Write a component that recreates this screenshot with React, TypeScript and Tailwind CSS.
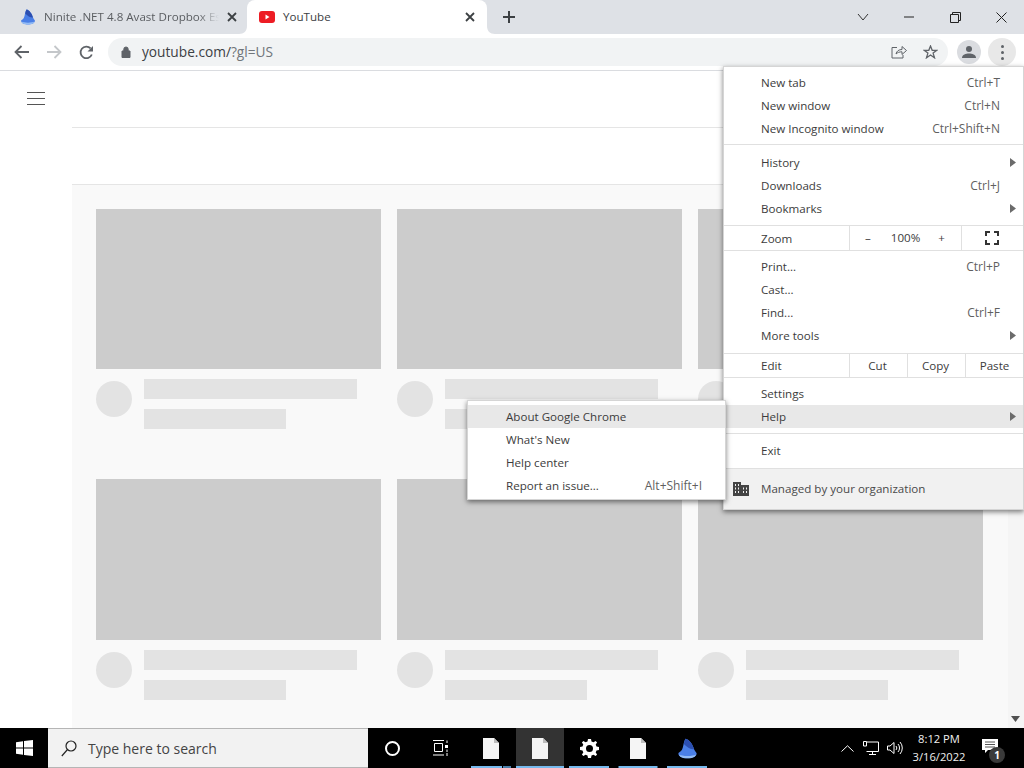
import React from "react";

const FONT = "font-['Open_Sans','Noto_Sans',sans-serif]";

function NiniteIcon({ size = 16 }: { size?: number }) {
  return (
    <svg width={size} height={size} viewBox="0 0 16 16">
      <path d="M6.500 .5 C9.500 1 12 5 13 8.500 C13.500 10 15 11 15 12 C14.500 14.500 11 15.500 8 15.500 C5 15.500 1.500 14.500 1 12 C1 11 3 10.500 3.800 9 C5 6.500 5 2.500 6.500 .5Z" fill="#4a7fe6" />
      <path d="M6.500 .5 C9.500 1 12 5 13 8.500 C10.500 8.800 7.500 7 5.200 4.500 C5.500 3 6 1.500 6.500 .5Z" fill="#2c4fb0" />
      <path d="M1.500 12.500 C4 14 12 14 14.500 12.500 C14 14.800 11 15.500 8 15.500 C5 15.500 2 14.800 1.500 12.500Z" fill="#93bcf5" />
    </svg>
  );
}

function Doc() {
  return (
    <svg width="16" height="21" viewBox="0 0 16 21">
      <path d="M0 0H11L16 5V21H0Z" fill="#f5f5f5" />
      <path d="M11 0L16 5H11Z" fill="#bdbdbd" />
    </svg>
  );
}

function Row({ label, right, arrow, active, sub }: { label: string; right?: string; arrow?: boolean; active?: boolean; sub?: boolean }) {
  return (
    <div className={`relative flex h-[23px] shrink-0 items-center justify-between pr-[23px] ${sub ? "pl-[38px]" : "pl-[37px]"} ${active ? "bg-[#e8e8e8]" : ""}`}>
      <span className="text-[#3c3c3c]">{label}</span>
      {right && <span className="text-[12px] text-[#5f5f5f]">{right}</span>}
      {arrow && (
        <svg className="absolute right-[7px] top-[7px]" width="6" height="9" viewBox="0 0 6 9">
          <path d="M0 0L6 4.500L0 9Z" fill="#6b6b6b" />
        </svg>
      )}
    </div>
  );
}

function Sep({ t, b }: { t: number; b: number }) {
  return <div className="h-px shrink-0 bg-[#e0e0e0]" style={{ marginTop: t, marginBottom: b }} />;
}

function Card({ tall }: { tall?: boolean }) {
  return (
    <div className="w-[285px] shrink-0">
      <div className={`bg-[#cccccc] ${tall ? "h-[161px]" : "h-[160px]"}`} />
      <div className="mt-[10px] flex gap-3">
        <div className="mt-[2px] h-9 w-9 shrink-0 rounded-full bg-[#e3e3e3]" />
        <div className="flex flex-col gap-[10px]">
          <div className="h-5 w-[213px] bg-[#e3e3e3]" />
          <div className="h-5 w-[142px] bg-[#e3e3e3]" />
        </div>
      </div>
    </div>
  );
}

function TbUnderline({ w }: { w: string }) {
  return <div className={`absolute bottom-0 left-1/2 h-[2px] -translate-x-1/2 bg-[#76b9ed] ${w}`} />;
}

export default function App() {
  return (
    <div className={`relative flex h-[768px] w-[1024px] flex-col overflow-hidden bg-white text-[11.6px] ${FONT}`}>
      {/* tab strip */}
      <div className="flex h-[34px] shrink-0 items-center bg-[#dee1e6] pl-[8px]">
        <div className="flex h-full w-[239px] shrink-0 items-center pl-[12px]">
          <NiniteIcon />
          <span className="ml-2 w-[175px] whitespace-nowrap text-[#5a5d61] [mask-image:linear-gradient(to_right,black_88%,transparent)]">Ninite .NET 4.8 Avast Dropbox Es</span>
          <svg className="ml-[8px]" width="10" height="10" viewBox="0 0 10 10"><path d="M1 1L9 9M9 1L1 9" stroke="#3c4043" strokeWidth="1.800" /></svg>
        </div>
        <div className="relative flex h-full w-[240px] shrink-0 items-center rounded-t-[8px] bg-white pl-[12px] pr-[12px]">
          <svg className="absolute -left-[8px] bottom-0" width="8" height="8" viewBox="0 0 8 8"><path d="M8 0V8H0C5 8 8 5 8 0Z" fill="#fff" /></svg>
          <svg className="absolute -right-[8px] bottom-0" width="8" height="8" viewBox="0 0 8 8"><path d="M0 0V8H8C3 8 0 5 0 0Z" fill="#fff" /></svg>
          <svg width="16" height="12" viewBox="0 0 16 12">
            <rect width="16" height="12" rx="3" fill="#ed1c24" />
            <path d="M6.500 3.500L10.500 6L6.500 8.500Z" fill="#fff" />
          </svg>
          <span className="ml-2 flex-1 text-[#3c4043]">YouTube</span>
          <svg width="10" height="10" viewBox="0 0 10 10"><path d="M1 1L9 9M9 1L1 9" stroke="#3c4043" strokeWidth="1.800" /></svg>
        </div>
        <svg className="ml-[15px]" width="14" height="14" viewBox="0 0 14 14"><path d="M7 1V13M1 7H13" stroke="#3c4043" strokeWidth="2" /></svg>
        <div className="ml-auto flex h-full items-center">
          <div className="flex w-[46px] justify-center">
            <svg width="12" height="8" viewBox="0 0 12 8"><path d="M1 1L6 7L11 1" stroke="#333" fill="none" /></svg>
          </div>
          <div className="flex w-[46px] justify-center">
            <svg width="10" height="2" viewBox="0 0 10 2"><path d="M0 1H10" stroke="#222" /></svg>
          </div>
          <div className="flex w-[46px] justify-center">
            <svg width="11" height="11" viewBox="0 0 11 11" fill="none"><path d="M.5 2.500H8.500V10.500H.5ZM2.500 2.500V.5H10.500V8.500H8.500" stroke="#222" /></svg>
          </div>
          <div className="flex w-[46px] justify-center">
            <svg width="11" height="11" viewBox="0 0 11 11"><path d="M.5 .5L10.500 10.500M10.500 .5L.5 10.500" stroke="#222" /></svg>
          </div>
        </div>
      </div>

      {/* toolbar */}
      <div className="flex h-[37px] shrink-0 items-center border-b border-[#dadce0] bg-white">
        <div className="flex w-[44px] justify-center">
          <svg width="16" height="14" viewBox="0 0 16 14" fill="none"><path d="M15 7H2M7.500 1L1.500 7L7.500 13" stroke="#5f6368" strokeWidth="1.800" /></svg>
        </div>
        <div className="-ml-[6px] flex w-[32px] justify-center">
          <svg width="16" height="14" viewBox="0 0 16 14" fill="none"><path d="M1 7H14M8.500 1L14.500 7L8.500 13" stroke="#c4c7ca" strokeWidth="1.800" /></svg>
        </div>
        <div className="flex w-[32px] justify-center">
          <svg width="15" height="15" viewBox="0 0 15 15" fill="none"><path d="M12.800 9.500A5.800 5.800 0 1 1 11.600 3.400" stroke="#5f6368" strokeWidth="1.800" /><path d="M14 1V6.500H8.500Z" fill="#5f6368" /></svg>
        </div>
        <div className="ml-[6px] flex h-[28px] w-[840px] items-center rounded-full bg-[#f1f3f4] pl-[13px] pr-[10px]">
          <svg width="10" height="12" viewBox="0 0 10 12"><path d="M1 5H9V11.500H1Z M2.800 5V3.200A2.200 2.200 0 0 1 7.200 3.200V5" fill="#5f6368" stroke="#5f6368" /></svg>
          <span className="ml-[11px] flex-1 text-[13.700px] text-[#3c4043]">youtube.com/<span className="text-[#70757a]">?gl=US</span></span>
          <svg width="16" height="14" viewBox="0 0 16 14" fill="none" stroke="#5f6368"><path d="M6 2.500H1V13H12V10" /><path d="M5 9C5.500 6 8 4.500 11 4.500V1.500L15.500 5.500L11 9.500V6.800C8.500 6.800 6.500 7.500 5 9Z" /></svg>
          <svg className="ml-[16px]" width="15" height="14" viewBox="0 0 15 14" fill="none" stroke="#5f6368" strokeWidth="1.300"><path d="M7.500 1L9.200 5.300H13.800L10.100 8.100L11.500 12.800L7.500 10L3.500 12.800L4.900 8.100L1.200 5.300H5.800Z" /></svg>
        </div>
        <div className="ml-[9px] flex h-6 w-6 items-center justify-center rounded-full bg-[#dadce0]">
          <svg width="14" height="14" viewBox="0 0 14 14" fill="#5f6368"><circle cx="7" cy="4" r="3" /><path d="M0 13C0 9.500 4 8.500 7 8.500S14 9.500 14 13Z" /></svg>
        </div>
        <div className="ml-[7px] flex h-7 w-7 flex-col items-center justify-center gap-[3px] rounded-full bg-[#e8e8e8]">
          <span className="h-[3px] w-[3px] rounded-full bg-[#5f6368]" />
          <span className="h-[3px] w-[3px] rounded-full bg-[#5f6368]" />
          <span className="h-[3px] w-[3px] rounded-full bg-[#5f6368]" />
        </div>
      </div>

      {/* page */}
      <div className="flex min-h-0 flex-1">
        <div className="w-[72px] shrink-0 pl-[27px] pt-[21px]">
          <div className="flex w-[18px] flex-col gap-[5px]">
            <div className="h-px bg-[#555]" />
            <div className="h-px bg-[#555]" />
            <div className="h-px bg-[#555]" />
          </div>
        </div>
        <div className="flex min-w-0 flex-1 flex-col">
          <div className="h-[57px] shrink-0 border-b border-[#e5e5e5]" />
          <div className="h-[57px] shrink-0 border-b border-[#e5e5e5]" />
          <div className="relative flex-1 bg-[#f9f9f9] pl-6 pt-6">
            <div className="flex gap-4">
              <Card /><Card /><Card />
            </div>
            <div className="mt-[50px] flex gap-4">
              <Card tall /><Card tall /><Card tall />
            </div>
            <div className="absolute bottom-0 right-0 top-0 w-4 bg-[#f5f5f5]">
              <svg className="absolute bottom-[6px] left-[3px]" width="9" height="6" viewBox="0 0 9 6"><path d="M0 0H9L4.500 6Z" fill="#505050" /></svg>
            </div>
          </div>
        </div>
      </div>

      {/* taskbar */}
      <div className="flex h-[40px] shrink-0 items-stretch bg-black text-white">
        <div className="flex w-[48px] items-center justify-center">
          <svg width="17" height="16" viewBox="0 0 17 16" fill="#fff"><path d="M0 2.300L7 1.300V7.500H0ZM8 1.100L17 0V7.500H8ZM0 8.500H7V14.700L0 13.700ZM8 8.500H17V16L8 14.900Z" /></svg>
        </div>
        <div className="flex w-[320px] items-center border-y border-[#b5b5b5] bg-[#f2f2f2] pl-[13px]">
          <svg width="16" height="17" viewBox="0 0 16 17" fill="none" stroke="#222" strokeWidth="1.200"><circle cx="10" cy="6" r="5" /><path d="M6.500 9.500L.8 16" /></svg>
          <span className="ml-[11px] text-[14px] text-[#444]">Type here to search</span>
        </div>
        <div className="flex w-[48px] items-center justify-center">
          <div className="h-[15px] w-[15px] rounded-full border-2 border-white" />
        </div>
        <div className="flex w-[48px] items-center justify-center">
          <svg width="16" height="16" viewBox="0 0 16 16" fill="none" stroke="#fff"><path d="M1 .5H12M2.500 3.500H10.500V11.500H2.500ZM1 15H12M15 .5V3M15 13V16" /><rect x="13" y="5" width="3" height="3" fill="#fff" stroke="none" /><path d="M15 9.500V12" /></svg>
        </div>
        <div className="relative ml-[7px] flex w-[40px] items-center justify-center">
          <Doc />
          <div className="absolute bottom-0 left-0 flex h-[2px] w-[40px]">
            <div className="w-[31px] bg-[#76b9ed]" />
            <div className="ml-px flex-1 bg-[#4a7fa8]" />
          </div>
        </div>
        <div className="relative ml-[5px] flex w-[48px] items-center justify-center bg-[#333]">
          <Doc />
          <TbUnderline w="w-[48px]" />
        </div>
        <div className="relative ml-[5px] flex w-[40px] items-center justify-center">
          <svg width="19" height="19" viewBox="0 0 19 19"><path fillRule="evenodd" fill="#fff" d="M8 0H11L11.500 2.500L13.500 3.300L15.600 1.900L17.100 3.400L15.700 5.500L16.500 7.500L19 8V11L16.500 11.500L15.700 13.500L17.100 15.600L15.600 17.100L13.500 15.700L11.500 16.500L11 19H8L7.500 16.500L5.500 15.700L3.400 17.100L1.900 15.600L3.300 13.500L2.500 11.500L0 11V8L2.500 7.500L3.300 5.500L1.900 3.400L3.400 1.900L5.500 3.300L7.500 2.500ZM9.500 6A3.500 3.500 0 1 0 9.500 13A3.500 3.500 0 1 0 9.500 6Z" /></svg>
          <TbUnderline w="w-[40px]" />
        </div>
        <div className="relative ml-[9px] flex w-[39px] items-center justify-center">
          <Doc />
          <TbUnderline w="w-[39px]" />
        </div>
        <div className="relative ml-[10px] flex w-[40px] items-center justify-center">
          <NiniteIcon size={21} />
          <TbUnderline w="w-[40px]" />
        </div>
        <div className="ml-[128px] flex w-[24px] items-center justify-center">
          <svg width="13" height="7" viewBox="0 0 13 7" fill="none" stroke="#fff"><path d="M.5 6.500L6.500 .8L12.500 6.500" /></svg>
        </div>
        <div className="flex w-[24px] items-center justify-center">
          <svg width="16" height="14" viewBox="0 0 16 14" fill="none" stroke="#fff"><path d="M3.500 1H15.500V10.500H3.500M.5 .5H3.500V5H.5ZM9.500 10.500V13.500M6 13.500H13" /></svg>
        </div>
        <div className="flex w-[24px] items-center justify-center">
          <svg width="16" height="14" viewBox="0 0 16 14" fill="none" stroke="#fff"><path d="M.5 5V9H3L7 12.500V1.500L3 5Z" /><path d="M9 5A3 3 0 0 1 9 9M11 3A6 6 0 0 1 11 11M13 1A9 9 0 0 1 13 13" /></svg>
        </div>
        <div className="flex w-[64px] flex-col items-center justify-center text-[11.200px] leading-[18px] text-[#f0f0f0]">
          <span>8:12 PM</span>
          <span>3/16/2022</span>
        </div>
        <div className="relative ml-[7px] flex w-[24px] items-center justify-center pb-[4px]">
          <svg width="16" height="14" viewBox="0 0 16 14"><path d="M0 0H16V11H6L3 14V11H0Z" fill="#fff" /><path d="M3 3H13M3 5.500H13M3 8H13" stroke="#555" /></svg>
          <div className="absolute left-[11px] top-[19px] flex h-[16px] w-[16px] items-center justify-center rounded-full bg-[#3a3a3a] text-[10px] font-bold leading-none text-white">1</div>
        </div>
      </div>

      {/* main Chrome menu */}
      <div className="absolute left-[723px] top-[66px] flex h-[444px] w-[301px] flex-col border border-[#d5d5d5] bg-white pt-[4px] shadow-[0_2px_5px_rgba(0,0,0,0.5)]">
        <Row label="New tab" right="Ctrl+T" />
        <Row label="New window" right="Ctrl+N" />
        <Row label="New Incognito window" right="Ctrl+Shift+N" />
        <Sep t={4} b={6} />
        <Row label="History" arrow />
        <Row label="Downloads" right="Ctrl+J" />
        <Row label="Bookmarks" arrow />
        <Sep t={5} b={0} />
        <div className="flex h-[24px] shrink-0 items-stretch">
          <div className="flex w-[125px] items-center pl-[37px] pt-[2px] text-[#3c3c3c]">Zoom</div>
          <div className="flex w-[112px] items-center border-l border-[#e0e0e0] text-[#3c3c3c]">
            <span className="ml-[15px]">–</span>
            <span className="ml-[20px]">100%</span>
            <span className="ml-[18px]">+</span>
          </div>
          <div className="flex flex-1 items-center justify-center border-l border-[#e0e0e0] pr-[2px]">
            <svg width="14" height="14" viewBox="0 0 14 14" fill="none" stroke="#333" strokeWidth="2"><path d="M1 5V1H5M9 1H13V5M13 9V13H9M5 13H1V9" /></svg>
          </div>
        </div>
        <Sep t={0} b={4} />
        <Row label="Print..." right="Ctrl+P" />
        <Row label="Cast..." />
        <Row label="Find..." right="Ctrl+F" />
        <Row label="More tools" arrow />
        <Sep t={6} b={0} />
        <div className="flex h-[23px] shrink-0 items-stretch text-[#3c3c3c]">
          <div className="flex w-[125px] items-center pl-[37px]">Edit</div>
          <div className="flex w-[58px] items-center justify-center border-l border-[#e0e0e0] pr-[2px]">Cut</div>
          <div className="flex w-[58px] items-center justify-center border-l border-[#e0e0e0] pr-[2px]">Copy</div>
          <div className="flex flex-1 items-center justify-center border-l border-[#e0e0e0]">Paste</div>
        </div>
        <Sep t={0} b={4} />
        <Row label="Settings" />
        <Row label="Help" arrow active />
        <Sep t={5} b={5} />
        <Row label="Exit" />
        <Sep t={6} b={0} />
        <div className="relative flex flex-1 items-center bg-[#f1f1f1] pl-[37px] text-[#4a4a4a]">
          <svg className="absolute left-[9px] top-[13px]" width="16" height="14" viewBox="0 0 16 14" fill="#444"><path fillRule="evenodd" d="M0 0H8V3H16V14H0ZM2 2V4H3V2ZM5 2V4H6V2ZM2 5.500V7.500H3V5.500ZM5 5.500V7.500H6V5.500ZM2 9V11H3V9ZM5 9V11H6V9ZM10 5.500V7.500H11V5.500ZM13 5.500V7.500H14V5.500ZM10 9V11H11V9ZM13 9V11H14V9Z" /></svg>
          Managed by your organization
        </div>
      </div>

      {/* help submenu */}
      <div className="absolute left-[467px] top-[400px] flex h-[100px] w-[259px] flex-col border border-[#d5d5d5] bg-white pt-[4px] shadow-[0_2px_5px_rgba(0,0,0,0.5)]">
        <Row sub label="About Google Chrome" active />
        <Row sub label="What's New" />
        <Row sub label="Help center" />
        <Row sub label="Report an issue..." right="Alt+Shift+I" />
      </div>
    </div>
  );
}
